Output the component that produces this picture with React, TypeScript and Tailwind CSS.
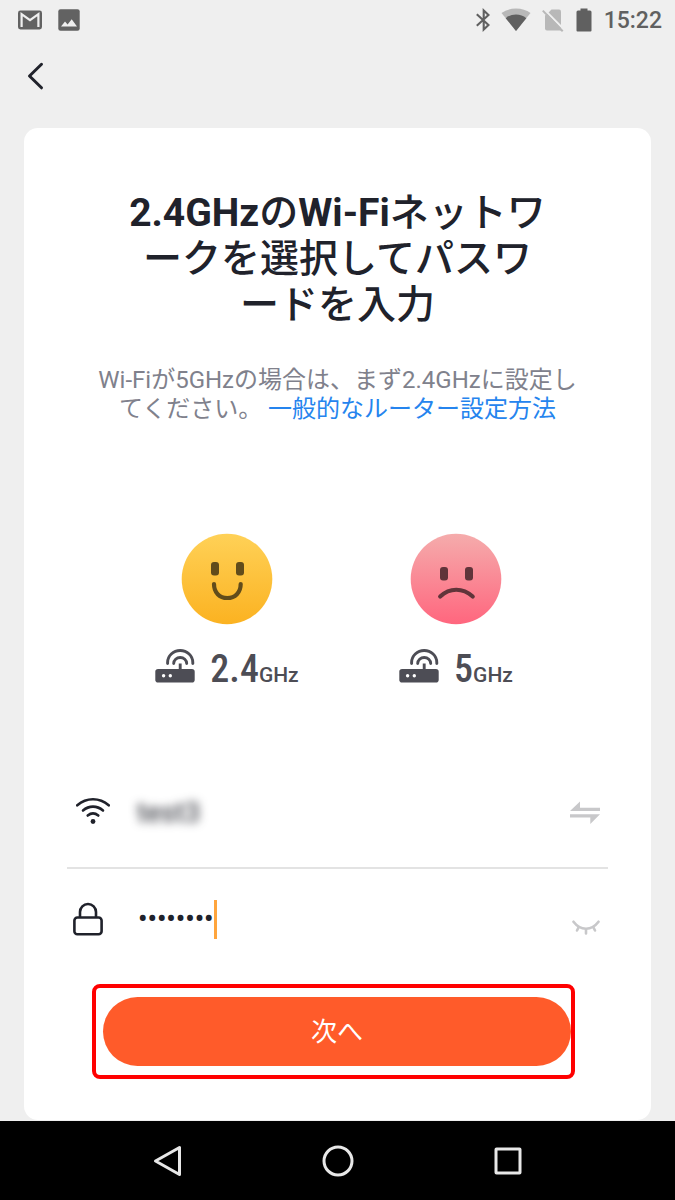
import { useState } from "react";
import type { ReactNode } from "react";

function GmailIcon() {
  return (
    <svg width="24" height="20" viewBox="0 0 24 20" aria-hidden="true">
      <rect x="0" y="0.5" width="24" height="19" rx="2.4" fill="#626262" />
      <path d="M3.6 17V4.2L12 10.2l8.400-6V17" fill="none" stroke="#efefef" strokeWidth="2.200" />
    </svg>
  );
}

function PictureIcon() {
  return (
    <svg width="22" height="22" viewBox="0 0 22 22" aria-hidden="true">
      <rect x="0.300" y="0.300" width="21.400" height="21.400" rx="2.200" fill="#626262" />
      <path d="M3 17.500 7 12.500l2.600 3.100 4.100-5.300 5.300 7.200z" fill="#efefef" />
    </svg>
  );
}

function BluetoothIcon() {
  return (
    <svg width="14" height="24" viewBox="0 0 14 24" aria-hidden="true">
      <path
        d="M0.800 6.200 12.500 17 7.700 21.500V2.500L12.500 7 0.800 17.800"
        fill="none"
        stroke="#606060"
        strokeWidth="2.100"
      />
    </svg>
  );
}

function StatusWifiIcon() {
  return (
    <svg width="30" height="24" viewBox="0 0 30 24" aria-hidden="true">
      <path d="M15 23 0.500 5Q6.500 0.500 15 0.500T29.500 5z" fill="#b8b8b8" />
      <path d="M15 23 4.700 10.200Q9 6.500 15 6.500t10.300 3.700z" fill="#606060" />
    </svg>
  );
}

function NoSimIcon() {
  return (
    <svg width="22" height="24" viewBox="0 0 22 24" aria-hidden="true">
      <path d="M9.500 1.500H17a2 2 0 0 1 2 2V18L5.600 5.400z" fill="#b8b8b8" />
      <path d="M3 7.500 5.600 5.400 19 18v4.500H5a2 2 0 0 1-2-2z" fill="#b8b8b8" />
      <path d="M2.200 1.400 22 21.500" stroke="#efefef" strokeWidth="2" />
      <path d="M0.800 2.600 20.700 23.300" stroke="#b8b8b8" strokeWidth="2" />
    </svg>
  );
}

function BatteryIcon() {
  return (
    <svg width="16" height="24" viewBox="0 0 16 24" aria-hidden="true">
      <path d="M4.500 0.500h7v2H14a1.500 1.500 0 0 1 1.500 1.500v18.500a1 1 0 0 1-1 1h-13a1 1 0 0 1-1-1V4A1.500 1.500 0 0 1 2 2.500h2.500z" fill="#606060" />
    </svg>
  );
}

function HappyFace() {
  return (
    <svg width="92" height="92" viewBox="0 0 92 92" role="img" aria-label="OK">
      <defs>
        <linearGradient id="happy" x1="0" y1="0" x2="0" y2="1">
          <stop offset="0" stopColor="#ffd157" />
          <stop offset="1" stopColor="#fbb221" />
        </linearGradient>
      </defs>
      <circle cx="46" cy="46" r="45.300" fill="url(#happy)" />
      <rect x="30" y="29" width="8" height="13.500" rx="3" fill="#614c1b" />
      <rect x="55" y="29" width="8" height="13.500" rx="3" fill="#614c1b" />
      <path d="M33 51c0 8.500 5.500 14 13.300 14s13.400-5.500 13.400-14" fill="none" stroke="#614c1b" strokeWidth="4.200" strokeLinecap="round" />
    </svg>
  );
}

function SadFace() {
  return (
    <svg width="92" height="92" viewBox="0 0 92 92" role="img" aria-label="NG">
      <defs>
        <linearGradient id="sad" x1="0" y1="0" x2="0" y2="1">
          <stop offset="0" stopColor="#f5acac" />
          <stop offset="1" stopColor="#ff667e" />
        </linearGradient>
      </defs>
      <circle cx="46" cy="46" r="45.300" fill="url(#sad)" />
      <rect x="30" y="34" width="8" height="13.500" rx="3" fill="#60343a" />
      <rect x="55" y="34" width="8" height="13.500" rx="3" fill="#60343a" />
      <path d="M30.200 63.500c9.500-9 22.500-9 32.500 0" fill="none" stroke="#60343a" strokeWidth="4.200" strokeLinecap="round" />
    </svg>
  );
}

function RouterIcon() {
  return (
    <svg width="40" height="34" viewBox="0 0 40 34" aria-hidden="true">
      <rect x="0.300" y="20" width="39.400" height="13.500" rx="2.800" fill="#4d4d55" />
      <circle cx="8.600" cy="26.700" r="1.700" fill="#fff" />
      <circle cx="15.300" cy="26.700" r="1.700" fill="#fff" />
      <g fill="none" stroke="#4d4d55" strokeWidth="2.900" strokeLinecap="round">
        <path d="M25.200 21v-6.500" strokeLinecap="butt" />
        <path d="M12.600 14.500v-1a12.600 12 0 0 1 25.200 0v1" />
        <path d="M18.700 14.500a6.500 6 0 0 1 13 0" />
      </g>
    </svg>
  );
}

function WifiIcon() {
  return (
    <svg width="34" height="32" viewBox="0 0 34 32" aria-hidden="true">
      <g fill="none" stroke="#20222b" strokeWidth="2.600" strokeLinecap="round">
        <path d="M1.300 8.300C10.500 0.300 23.500 0.300 32.700 8.300" />
        <path d="M7 13.500c6-5.200 14-5.200 20 0" />
        <path d="M11.700 18.500c3.200-2.600 7.400-2.600 10.600 0" />
      </g>
      <circle cx="17" cy="24.500" r="2.400" fill="#20222b" />
    </svg>
  );
}

function LockIcon() {
  return (
    <svg width="30" height="34" viewBox="0 0 30 34" fill="none" stroke="#20222b" strokeWidth="2.600" aria-hidden="true">
      <rect x="1.400" y="15.500" width="27.200" height="16.700" rx="3" />
      <path d="M7 15.500V10a8 8 0 0 1 16 0v5.500" />
    </svg>
  );
}

function SwapIcon() {
  return (
    <svg width="30" height="24" viewBox="0 0 30 24" fill="#c8c8ca" aria-hidden="true">
      <path d="M0 10 10 0.500V6.700H30V10z" />
      <path d="M30 13.300 20.300 23v-6.400H0v-3.300z" />
    </svg>
  );
}

function ClosedEyeIcon() {
  return (
    <svg width="28" height="15" viewBox="0 0 28 15" fill="none" stroke="#c8c8ca" strokeWidth="2.600" strokeLinecap="round" aria-hidden="true">
      <path d="M1.500 1.700C8.500 11 19.500 11 26.500 1.700" />
      <path d="M6.500 7.500 5 10.500M14 9.500v4M21.500 7.500l1.500 3" />
    </svg>
  );
}

function Band({ face, value }: { face: ReactNode; value: string }) {
  return (
    <li className="flex w-[229px] flex-col items-center">
      {face}
      <div className="mt-6 flex items-start gap-[15px] text-[#4d4d55]">
        <RouterIcon />
        <span className="flex items-baseline leading-10 font-medium">
          <span className="font-['Roboto_Condensed',Roboto,sans-serif] text-[38px]">{value}</span>
          <span className="text-[21px]">GHz</span>
        </span>
      </div>
    </li>
  );
}

export default function App() {
  const [password, setPassword] = useState("password");

  return (
    <div className="flex min-h-screen flex-col bg-[#efefef] font-[Roboto,'Noto_Sans_CJK_JP',sans-serif] text-[#20222b]" lang="ja">
      <header>
        <div className="flex h-10 items-center justify-between pr-[13px] pl-[18px]">
          <div className="flex items-center gap-4">
            <GmailIcon />
            <PictureIcon />
          </div>
          <div className="flex items-center gap-3">
            <div className="flex items-center gap-[11px]">
              <BluetoothIcon />
              <StatusWifiIcon />
              <NoSimIcon />
            </div>
            <BatteryIcon />
            <time className="pt-0.5 text-[23px] leading-6 font-medium text-[#606060]">15:22</time>
          </div>
        </div>
        <div className="flex h-[88px] items-start pt-[22px] pl-[27px]">
          <button type="button" aria-label="戻る">
            <svg width="17" height="28" viewBox="0 0 17 28" fill="none" stroke="#20222b" strokeWidth="3" strokeLinecap="round" strokeLinejoin="round" aria-hidden="true">
              <path d="M14.500 2.300 2.500 14l12 11.800" />
            </svg>
          </button>
        </div>
      </header>

      <main className="mx-6 mb-px flex-1 rounded-[14px] bg-white pt-[62px]">
        <h1 className="text-center text-[39px] leading-[46px] font-medium">
          <span className="font-bold">2.4GHz</span>の<span className="font-bold">Wi-Fi</span>ネットワ
          <br />
          ークを選択してパスワ
          <br />
          ードを入力
        </h1>
        <p className="mt-[38px] text-center text-[24px] leading-[29px] text-[#80818c]">
          Wi-Fiが5GHzの場合は、まず2.4GHzに設定し
          <br />
          てください。{" "}
          <a href="#router" className="text-[#2584ee]">
            一般的なルーター設定方法
          </a>
        </p>

        <ul className="mt-[109px] flex justify-center pl-2">
          <Band face={<HappyFace />} value="2.4" />
          <Band face={<SadFace />} value="5" />
        </ul>

        <form className="mt-[63px]" onSubmit={(event) => event.preventDefault()}>
          <div className="mx-[43px] flex h-[111px] items-center border-b-2 border-[#e3e3e3] pr-2 pl-[9px]">
            <label htmlFor="ssid" aria-label="Wi-Fi">
              <WifiIcon />
            </label>
            <input id="ssid" defaultValue="test3" className="ml-[27px] w-0 flex-1 bg-transparent text-[28px] leading-8 blur-[5px] outline-none" />
            <button type="button" aria-label="ネットワークを変更">
              <SwapIcon />
            </button>
          </div>
          <div className="mx-[43px] flex h-[100px] items-center pr-2 pl-[6px]">
            <label htmlFor="password" aria-label="パスワード">
              <LockIcon />
            </label>
            <div className="ml-[35px] flex flex-1 items-center">
              <input
                id="password"
                type="password"
                value={password}
                onChange={(event) => setPassword(event.target.value)}
                className="bg-transparent text-[27px] leading-8 font-medium caret-transparent outline-none [field-sizing:content]"
              />
              <span className="h-[39px] w-[3px] bg-[#ffa53d]" />
            </div>
            <button type="button" aria-label="パスワードを表示" className="pt-4">
              <ClosedEyeIcon />
            </button>
          </div>
          <div className="mt-[15px] mr-[76px] ml-[68px] rounded-lg border-4 border-[#ff0000] py-[9px] pl-[7px]">
            <button type="submit" className="h-[69px] w-full rounded-full bg-[#ff5b2a] pt-0.5 text-[26px] text-white">
              次へ
            </button>
          </div>
        </form>
      </main>

      <nav className="flex h-[79px] items-center justify-center gap-[139px] bg-black">
        <button type="button" aria-label="戻る">
          <svg width="30" height="32" viewBox="0 0 30 32" fill="none" stroke="#e8e8e8" strokeWidth="3" strokeLinejoin="round" aria-hidden="true">
            <path d="M26.500 2.500v27L2.500 16z" />
          </svg>
        </button>
        <button type="button" aria-label="ホーム">
          <svg width="32" height="32" viewBox="0 0 32 32" fill="none" stroke="#e8e8e8" strokeWidth="3" aria-hidden="true">
            <circle cx="16" cy="16" r="14" />
          </svg>
        </button>
        <button type="button" aria-label="アプリ履歴">
          <svg width="30" height="30" viewBox="0 0 30 30" fill="none" stroke="#e8e8e8" strokeWidth="3" strokeLinejoin="round" aria-hidden="true">
            <rect x="3" y="3" width="24" height="24" rx="0.500" />
          </svg>
        </button>
      </nav>
    </div>
  );
}
